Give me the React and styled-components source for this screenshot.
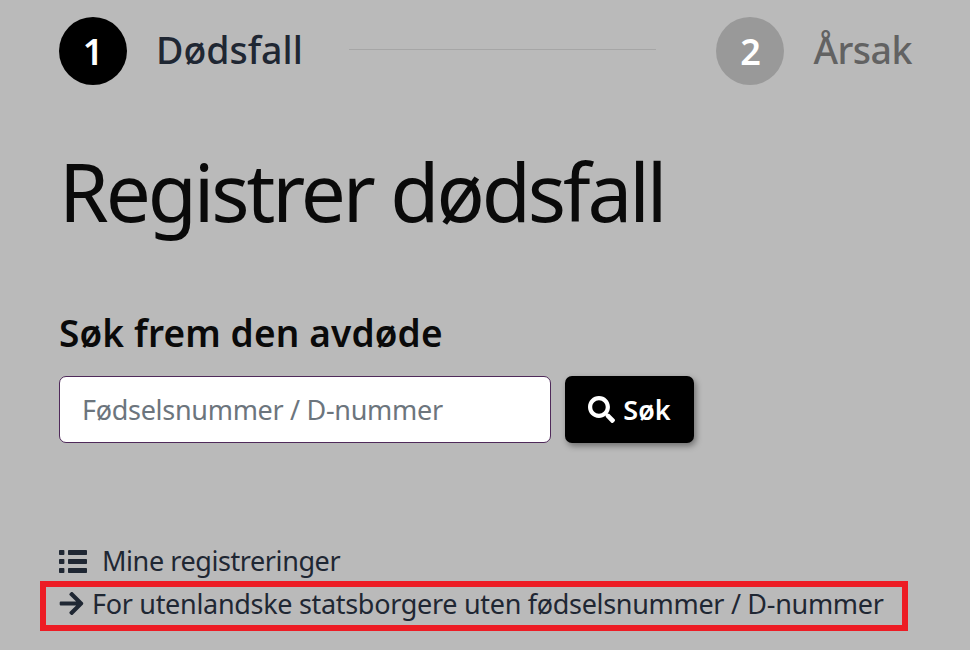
import React from 'react';
import styled, { createGlobalStyle } from 'styled-components';
import { FaArrowRight, FaSearch } from 'react-icons/fa';

const GlobalStyle = createGlobalStyle`
  html, body {
    margin: 0;
    background: #bababa;
  }
  body {
    font-family: 'Noto Sans', 'Open Sans', 'Liberation Sans', sans-serif;
    color: #1f2733;
  }
`;

function ListIcon() {
  return (
    <svg width="28" height="23" viewBox="0 0 28 23" fill="currentColor">
      <rect x="0" y="0" width="5.4" height="5" rx="0.8" />
      <rect x="9" y="0" width="19" height="5" rx="0.8" />
      <rect x="0" y="9" width="5.4" height="5" rx="0.8" />
      <rect x="9" y="9" width="19" height="5" rx="0.8" />
      <rect x="0" y="18" width="5.4" height="5" rx="0.8" />
      <rect x="9" y="18" width="19" height="5" rx="0.8" />
    </svg>
  );
}

export default function App() {
  return (
    <Page>
      <GlobalStyle />
      <Steps>
        <Step>
          <StepNumber active>1</StepNumber>
          <StepLabel>Dødsfall</StepLabel>
        </Step>
        <StepLine />
        <Step>
          <StepNumber>2</StepNumber>
          <StepLabel muted>Årsak</StepLabel>
        </Step>
      </Steps>

      <Title>Registrer dødsfall</Title>

      <SubTitle>Søk frem den avdøde</SubTitle>
      <SearchRow>
        <SearchInput placeholder="Fødselsnummer / D-nummer" />
        <SearchButton>
          <FaSearch size={27} />
          Søk
        </SearchButton>
      </SearchRow>

      <Links>
        <ListLink>
          <ListIcon />
          Mine registreringer
        </ListLink>
        <HighlightedLink>
          <FaArrowRight size={27} />
          For utenlandske statsborgere uten fødselsnummer / D-nummer
        </HighlightedLink>
      </Links>
    </Page>
  );
}

const Page = styled.main`
  width: 970px;
  height: 650px;
  box-sizing: border-box;
  padding: 17px 58px 0 59px;
  overflow: hidden;
`;

const Steps = styled.div`
  display: flex;
  align-items: center;
  justify-content: space-between;
  height: 68px;
`;

const Step = styled.div`
  display: flex;
  align-items: center;
  gap: 29px;
`;

const StepNumber = styled.span`
  width: 68px;
  height: 68px;
  border-radius: 50%;
  display: flex;
  align-items: center;
  justify-content: center;
  background: ${(props) => (props.active ? '#000' : '#999')};
  color: #fff;
  font-size: 36px;
  font-weight: 600;
`;

const StepLabel = styled.span`
  font-size: 37.5px;
  line-height: 50px;
  margin-top: -3px;
  font-weight: 500;
  letter-spacing: ${(props) => (props.muted ? '-0.5px' : '0')};
  color: ${(props) => (props.muted ? '#626262' : '#1f2733')};
`;

const StepLine = styled.div`
  width: 307px;
  height: 1px;
  margin: -3px 0 0 -15px;
  background: #a6a6a6;
`;

const Title = styled.h1`
  margin: 52px 0 0;
  font-size: 80px;
  line-height: 108px;
  font-weight: 400;
  letter-spacing: -3.1px;
  color: #0a0a0a;
`;

const SubTitle = styled.h2`
  margin: 64px 0 0;
  font-size: 37px;
  line-height: 48px;
  font-weight: 600;
  letter-spacing: 0.15px;
  color: #0a0a0a;
`;

const SearchRow = styled.div`
  display: flex;
  gap: 14px;
  margin-top: 19px;
`;

const SearchInput = styled.input`
  width: 492px;
  height: 67px;
  box-sizing: border-box;
  padding: 0 22px;
  border: 1.5px solid #4f2a5a;
  border-radius: 7px;
  background: #fff;
  font: inherit;
  font-size: 27px;
  letter-spacing: -0.3px;
  color: #1f2733;

  &::placeholder {
    color: #6c757d;
    opacity: 1;
  }
`;

const SearchButton = styled.button`
  width: 129px;
  height: 67px;
  display: flex;
  align-items: center;
  justify-content: center;
  gap: 8px;
  border: 0;
  border-radius: 7px;
  background: #000;
  color: #fff;
  font: inherit;
  font-size: 27px;
  font-weight: 600;
  box-shadow: 2px 3px 6px rgba(0, 0, 0, 0.4);
`;

const Links = styled.div`
  display: flex;
  flex-direction: column;
  margin-top: 99px;
`;

const ListLink = styled.a`
  display: flex;
  align-items: center;
  gap: 15px;
  font-size: 27px;
  line-height: 38px;
  letter-spacing: -0.42px;
  color: #1f2733;
`;

const HighlightedLink = styled.a`
  display: flex;
  align-items: center;
  gap: 7px;
  width: 868px;
  height: 50px;
  box-sizing: border-box;
  margin: 1px 0 0 -19px;
  padding: 0 0 6px 12px;
  border: 6px solid #ed1c24;
  font-size: 27px;
  letter-spacing: -0.31px;
  color: #1f2733;
`;
